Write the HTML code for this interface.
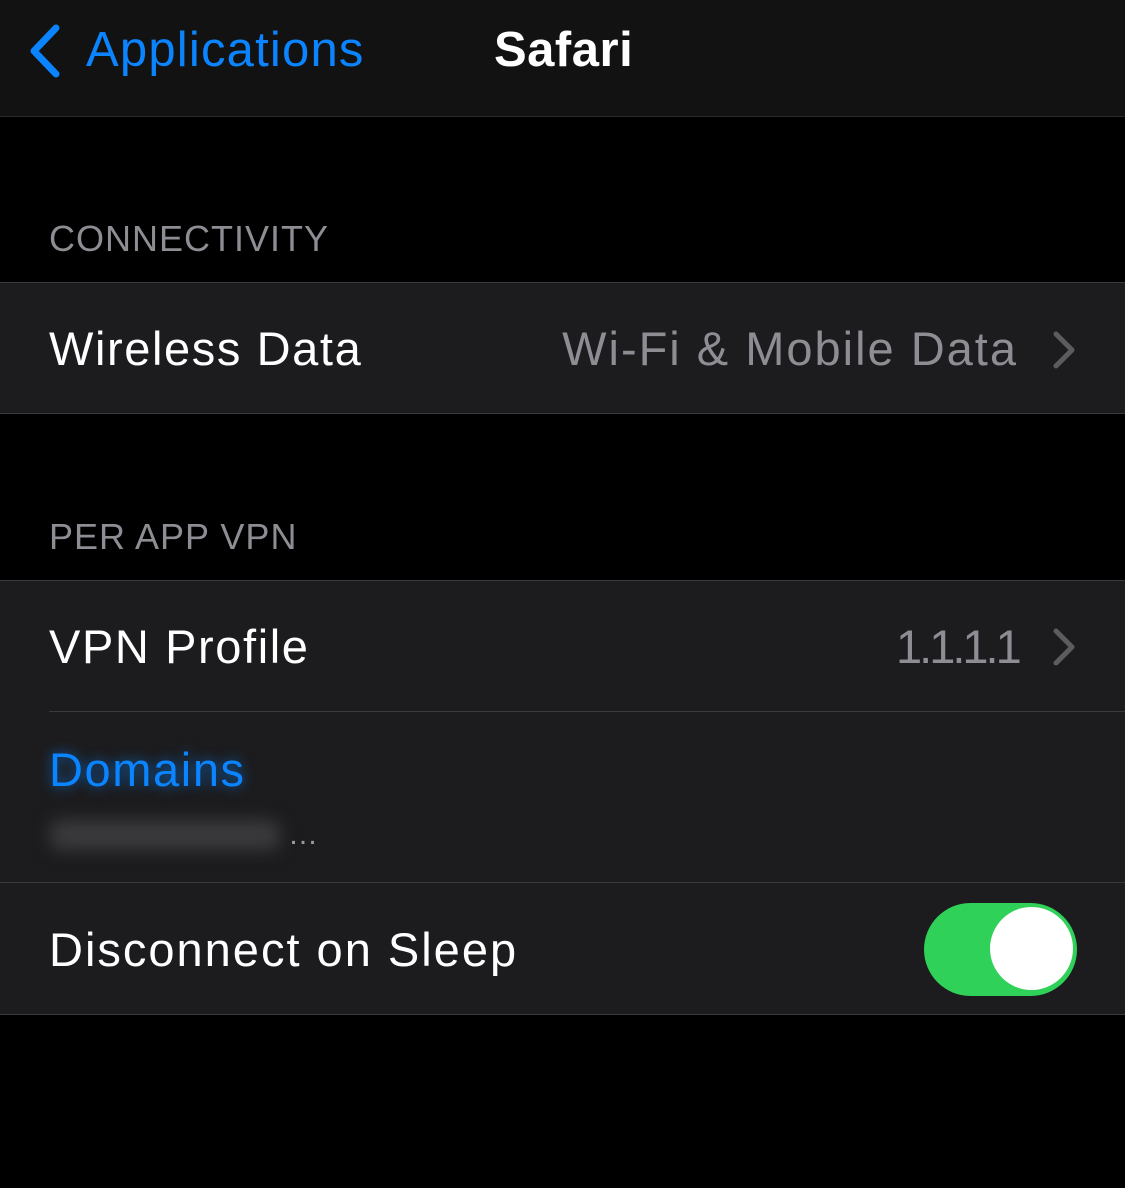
<!DOCTYPE html>
<html><head><style>
body{margin:0;width:1125px;height:1188px;background:#000;font-family:"Liberation Sans",sans-serif;position:relative;overflow:hidden}
.abs{position:absolute}
.nav{left:0;top:0;width:1125px;height:116px;background:#121212;border-bottom:1px solid #2a2a2c}
.row{left:0;width:1125px;background:#1c1c1e}
.t{font-size:47px;color:#fff;white-space:nowrap;letter-spacing:1.6px}
.h{font-size:36px;color:#8d8d93;letter-spacing:1px}
.sep{height:1px;background:#3a3a3c}
.r{right:107px;text-align:right;color:#8d8d93}
</style></head><body>
<div class="abs nav"></div>
<svg class="abs" style="left:24px;top:22px" width="40" height="58"><path d="M32 6 L10 29 L32 52" stroke="#0a84ff" stroke-width="7" fill="none" stroke-linecap="round" stroke-linejoin="round"/></svg>
<div class="abs t" style="left:86px;top:22px;color:#0a84ff;font-size:49px;letter-spacing:1.2px">Applications</div>
<div class="abs t" style="left:494px;top:22px;font-weight:bold;font-size:49px;letter-spacing:0.5px">Safari</div>

<div class="abs h" style="left:49px;top:218px">CONNECTIVITY</div>
<div class="abs sep" style="left:0;top:282px;width:1125px"></div>
<div class="abs row" style="top:283px;height:130px"></div>
<div class="abs sep" style="left:0;top:413px;width:1125px"></div>
<div class="abs t" style="left:49px;top:321px">Wireless Data</div>
<div class="abs t r" style="top:321px;letter-spacing:2px">Wi-Fi &amp; Mobile Data</div>
<svg class="abs" style="left:1050px;top:330px" width="30" height="40"><path d="M6 4 L22 20 L6 36" stroke="#5c5c60" stroke-width="5" fill="none" stroke-linecap="round" stroke-linejoin="round"/></svg>

<div class="abs h" style="left:49px;top:516px">PER APP VPN</div>
<div class="abs sep" style="left:0;top:580px;width:1125px"></div>
<div class="abs row" style="top:581px;height:433px"></div>
<div class="abs t" style="left:49px;top:619px">VPN Profile</div>
<div class="abs t" style="left:896px;top:619px;color:#8d8d93;letter-spacing:-3px">1.1.1.1</div>
<svg class="abs" style="left:1050px;top:627px" width="30" height="40"><path d="M6 4 L22 20 L6 36" stroke="#5c5c60" stroke-width="5" fill="none" stroke-linecap="round" stroke-linejoin="round"/></svg>
<div class="abs sep" style="left:49px;top:711px;width:1076px"></div>
<div class="abs t" style="left:49px;top:742px;color:#0a84ff;text-shadow:0 0 12px rgba(10,132,255,.7)">Domains</div>
<div class="abs" style="left:50px;top:820px;width:230px;height:30px;background:#3a3a3d;filter:blur(8px);border-radius:10px"></div>
<div class="abs" style="left:288px;top:818px;color:#9a9a9e;font-size:30px">…</div>
<div class="abs sep" style="left:0;top:882px;width:1125px"></div>
<div class="abs t" style="left:49px;top:922px;letter-spacing:2px">Disconnect on Sleep</div>
<div class="abs" style="left:924px;top:903px;width:153px;height:93px;border-radius:47px;background:#30d158"></div>
<div class="abs" style="left:990px;top:907px;width:83px;height:83px;border-radius:50%;background:#fff"></div>
<div class="abs sep" style="left:0;top:1014px;width:1125px"></div>
</body></html>
